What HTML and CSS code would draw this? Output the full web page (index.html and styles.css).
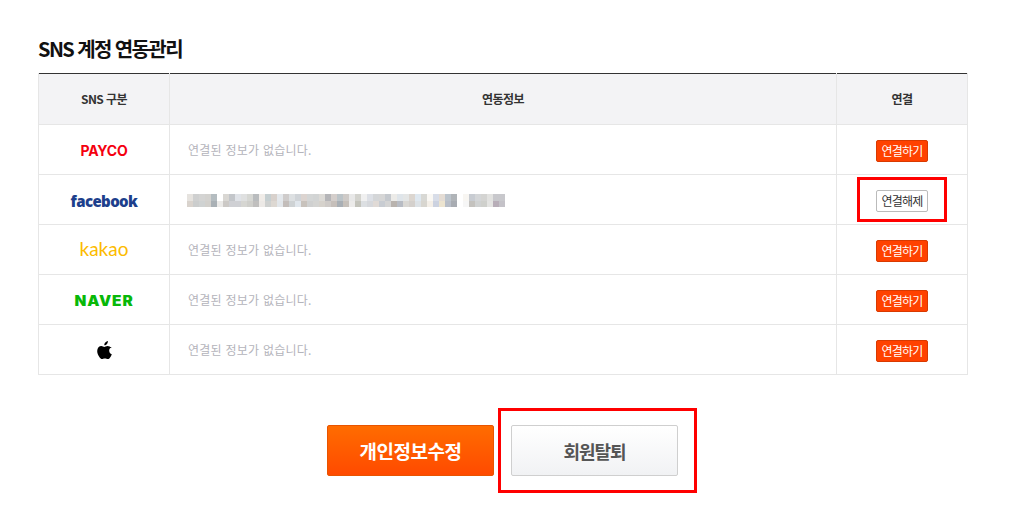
FILE: index.html
```html
<!DOCTYPE html>
<html lang="ko">

<head>
    <meta charset="UTF-8" />
    <title>SNS 계정 연동관리</title>
    <link rel="stylesheet" href="styles.css">
</head>

<body>
    <div class="wrapper">
        <h2 class="title">SNS 계정 연동관리</h2>

        <table class="sns-table">
            <thead>
                <tr>
                    <th class="col-sns">SNS 구분</th>
                    <th>연동정보</th>
                    <th class="col-link">연결</th>
                </tr>
            </thead>
            <tbody>
                <tr>
                    <td><span class="logo payco">PAYCO</span></td>
                    <td class="info">연결된 정보가 없습니다.</td>
                    <td><button type="button" class="btn-small on">연결하기</button></td>
                </tr>
                <tr>
                    <td><span class="logo facebook">facebook</span></td>
                    <td class="info">
                        <svg class="mosaic" width="320" height="16" viewBox="0 0 320 16" shape-rendering="crispEdges" aria-hidden="true">
                            <g>
                                <rect x="0" y="1" width="6" height="7" fill="#e6e3df" />
                                <rect x="6" y="1" width="6" height="7" fill="#cfd0d0" />
                                <rect x="12" y="1" width="6" height="7" fill="#d4d4d3" />
                                <rect x="18" y="1" width="6" height="7" fill="#d3d2cf" />
                                <rect x="24" y="1" width="6" height="7" fill="#b4bcc0" />
                                <rect x="36" y="1" width="6" height="7" fill="#d9d7d3" />
                                <rect x="42" y="1" width="6" height="7" fill="#c3c6ca" />
                                <rect x="48" y="1" width="6" height="7" fill="#e0e3e8" />
                                <rect x="54" y="1" width="6" height="7" fill="#dfe0e0" />
                                <rect x="60" y="1" width="6" height="7" fill="#d6d7d3" />
                                <rect x="66" y="1" width="6" height="7" fill="#b9bcbe" />
                                <rect x="72" y="1" width="6" height="7" fill="#f0ece8" />
                                <rect x="78" y="1" width="6" height="7" fill="#c6cfd1" />
                                <rect x="84" y="1" width="6" height="7" fill="#d8d1cc" />
                                <rect x="90" y="1" width="6" height="7" fill="#e4e8ec" />
                                <rect x="96" y="1" width="6" height="7" fill="#cfcccb" />
                                <rect x="102" y="1" width="6" height="7" fill="#dde0e2" />
                                <rect x="108" y="1" width="6" height="7" fill="#d0d4d8" />
                                <rect x="114" y="1" width="6" height="7" fill="#dcd4d0" />
                                <rect x="120" y="1" width="6" height="7" fill="#d4d6d6" />
                                <rect x="126" y="1" width="6" height="7" fill="#d2d4d4" />
                                <rect x="132" y="1" width="6" height="7" fill="#dcdad6" />
                                <rect x="138" y="1" width="6" height="7" fill="#b5b5b8" />
                                <rect x="144" y="1" width="6" height="7" fill="#d4cecb" />
                                <rect x="150" y="1" width="6" height="7" fill="#bcc4c8" />
                                <rect x="156" y="1" width="6" height="7" fill="#cfcbc8" />
                                <rect x="162" y="1" width="6" height="7" fill="#e8e8e8" />
                                <rect x="168" y="1" width="6" height="7" fill="#d3d3ce" />
                                <rect x="174" y="1" width="6" height="7" fill="#f0f0f0" />
                                <rect x="180" y="1" width="6" height="7" fill="#dde0e6" />
                                <rect x="186" y="1" width="6" height="7" fill="#d4d6d8" />
                                <rect x="192" y="1" width="6" height="7" fill="#d6d6d6" />
                                <rect x="198" y="1" width="6" height="7" fill="#c5c9ce" />
                                <rect x="204" y="1" width="6" height="7" fill="#ecebe8" />
                                <rect x="210" y="1" width="6" height="7" fill="#dfe5ea" />
                                <rect x="216" y="1" width="6" height="7" fill="#e4e6e6" />
                                <rect x="222" y="1" width="6" height="7" fill="#dcd6d0" />
                                <rect x="228" y="1" width="6" height="7" fill="#dfe8f0" />
                                <rect x="234" y="1" width="6" height="7" fill="#d8d8d4" />
                                <rect x="240" y="1" width="6" height="7" fill="#faf8f4" />
                                <rect x="246" y="1" width="6" height="7" fill="#d8dde8" />
                                <rect x="252" y="1" width="6" height="7" fill="#e4dcd4" />
                                <rect x="258" y="1" width="6" height="7" fill="#bcc4cc" />
                                <rect x="264" y="1" width="6" height="7" fill="#b0b4b8" />
                                <rect x="276" y="1" width="6" height="7" fill="#f8f6f2" />
                                <rect x="282" y="1" width="6" height="7" fill="#c8ccd2" />
                                <rect x="288" y="1" width="6" height="7" fill="#d4d6d8" />
                                <rect x="294" y="1" width="6" height="7" fill="#d4d4d2" />
                                <rect x="300" y="1" width="6" height="7" fill="#e2e2e0" />
                                <rect x="306" y="1" width="12" height="7" fill="#c8c8cc" />
                            </g>
                            <g>
                                <rect x="0" y="8" width="6" height="6" fill="#d9d3cd" />
                                <rect x="6" y="8" width="6" height="6" fill="#cbcdcd" />
                                <rect x="12" y="8" width="6" height="6" fill="#cfd2d2" />
                                <rect x="18" y="8" width="6" height="6" fill="#d2d0cc" />
                                <rect x="24" y="8" width="6" height="6" fill="#a9b0b5" />
                                <rect x="30" y="8" width="6" height="6" fill="#ebeae8" />
                                <rect x="36" y="8" width="6" height="6" fill="#ccc9c6" />
                                <rect x="42" y="8" width="12" height="6" fill="#cfd0d4" />
                                <rect x="54" y="8" width="6" height="6" fill="#d6d6d2" />
                                <rect x="60" y="8" width="6" height="6" fill="#cfcfcb" />
                                <rect x="66" y="8" width="6" height="6" fill="#c0bfbe" />
                                <rect x="72" y="8" width="6" height="6" fill="#ece9e6" />
                                <rect x="78" y="8" width="6" height="6" fill="#cfd1d0" />
                                <rect x="84" y="8" width="6" height="6" fill="#ddd8d2" />
                                <rect x="90" y="8" width="6" height="6" fill="#e2e6ea" />
                                <rect x="96" y="8" width="6" height="6" fill="#c3bdba" />
                                <rect x="102" y="8" width="6" height="6" fill="#ced2d4" />
                                <rect x="108" y="8" width="6" height="6" fill="#e0e6ec" />
                                <rect x="114" y="8" width="6" height="6" fill="#c8c2bc" />
                                <rect x="120" y="8" width="6" height="6" fill="#cfd0d0" />
                                <rect x="126" y="8" width="6" height="6" fill="#d4d4d2" />
                                <rect x="132" y="8" width="6" height="6" fill="#d6d2cc" />
                                <rect x="138" y="8" width="6" height="6" fill="#cfcbc8" />
                                <rect x="144" y="8" width="6" height="6" fill="#c6bfba" />
                                <rect x="150" y="8" width="6" height="6" fill="#a9afb5" />
                                <rect x="156" y="8" width="6" height="6" fill="#c6c0ba" />
                                <rect x="162" y="8" width="6" height="6" fill="#ecebea" />
                                <rect x="168" y="8" width="6" height="6" fill="#c4c4bc" />
                                <rect x="174" y="8" width="6" height="6" fill="#dcdfe2" />
                                <rect x="180" y="8" width="6" height="6" fill="#d6d8dc" />
                                <rect x="186" y="8" width="6" height="6" fill="#e0dad6" />
                                <rect x="192" y="8" width="6" height="6" fill="#c8ccd2" />
                                <rect x="198" y="8" width="6" height="6" fill="#d4d4d4" />
                                <rect x="204" y="8" width="6" height="6" fill="#b9b3ae" />
                                <rect x="210" y="8" width="6" height="6" fill="#b8bcc4" />
                                <rect x="216" y="8" width="6" height="6" fill="#dad8d4" />
                                <rect x="222" y="8" width="6" height="6" fill="#d4d0cc" />
                                <rect x="228" y="8" width="6" height="6" fill="#dde2e6" />
                                <rect x="234" y="8" width="6" height="6" fill="#d8d6d0" />
                                <rect x="240" y="8" width="6" height="6" fill="#f4efe8" />
                                <rect x="246" y="8" width="6" height="6" fill="#ccd2e0" />
                                <rect x="252" y="8" width="6" height="6" fill="#ece4d0" />
                                <rect x="258" y="8" width="6" height="6" fill="#b8bec8" />
                                <rect x="264" y="8" width="6" height="6" fill="#a8acb2" />
                                <rect x="276" y="8" width="6" height="6" fill="#f6f6f6" />
                                <rect x="282" y="8" width="6" height="6" fill="#c4c2be" />
                                <rect x="288" y="8" width="6" height="6" fill="#d0d2d2" />
                                <rect x="294" y="8" width="6" height="6" fill="#cfd0cc" />
                                <rect x="300" y="8" width="6" height="6" fill="#e4e4e2" />
                                <rect x="306" y="8" width="6" height="6" fill="#b8aeb8" />
                                <rect x="312" y="8" width="6" height="6" fill="#c4c2c8" />
                            </g>
                        </svg>
                    </td>
                    <td>
                        <span class="mark-holder">
                            <button type="button" class="btn-small">연결해제</button>
                            <span class="mark mark-small"></span>
                        </span>
                    </td>
                </tr>
                <tr>
                    <td><span class="logo kakao">kakao</span></td>
                    <td class="info">연결된 정보가 없습니다.</td>
                    <td><button type="button" class="btn-small on">연결하기</button></td>
                </tr>
                <tr>
                    <td><span class="logo naver">NAVER</span></td>
                    <td class="info">연결된 정보가 없습니다.</td>
                    <td><button type="button" class="btn-small on">연결하기</button></td>
                </tr>
                <tr>
                    <td>
                        <svg class="apple" width="15" height="18" viewBox="0 0 15 18" aria-label="Apple">
                            <path d="M10.9 0c.1 1.1-.3 2.1-.9 2.9-.7.8-1.700 1.400-2.700 1.300-.1-1 .4-2.100 1-2.800C9 .6 10.100.1 10.900 0zM14.300 6.200c-1.500.9-2.200 2-2.100 3.500.1 1.700 1 2.800 2.600 3.500-.4 1.200-1 2.300-1.700 3.300-.7 1-1.400 1.500-2.300 1.500-1 0-1.500-.6-2.900-.6-1.400 0-2 .6-2.900.6-.9 0-1.700-.6-2.500-1.800C.9 14.100.2 12 .2 10.100c0-3.100 2-5 4.200-5 1.200 0 2.100.8 2.900.8.700 0 1.800-.9 3.200-.9 1.600 0 2.900.7 3.800 2.200z" />
                        </svg>
                    </td>
                    <td class="info">연결된 정보가 없습니다.</td>
                    <td><button type="button" class="btn-small on">연결하기</button></td>
                </tr>
            </tbody>
        </table>

        <div class="btn-row">
            <button type="button" class="btn btn-edit">개인정보수정</button>
            <span class="mark-holder">
                <button type="button" class="btn btn-leave">회원탈퇴</button>
                <span class="mark mark-big"></span>
            </span>
        </div>
    </div>
</body>

</html>
```

FILE: styles.css
```css
* {
    box-sizing: border-box;
}

body {
    margin: 0;
    background-color: #fff;
    font-family: 'Noto Sans CJK KR', 'Noto Sans', sans-serif;
    color: #333;
}

.wrapper {
    width: 930px;
    margin-left: 38px;
    padding-top: 34px;
    padding-bottom: 42px;
}

.title {
    margin: 0 0 10px;
    font-size: 20px;
    line-height: 29px;
    font-weight: 700;
    letter-spacing: -1.6px;
    color: #111;
}

.sns-table {
    width: 100%;
    border-collapse: collapse;
    table-layout: fixed;
    border-top: 1px solid #333;
}

.sns-table th,
.sns-table td {
    border: 1px solid #e6e6e6;
    text-align: center;
    padding: 0;
}

.sns-table thead tr:first-child th {
    border-top: 0;
}

.sns-table th {
    height: 51px;
    padding-bottom: 2px;
    background-color: #f3f3f5;
    font-size: 12px;
    font-weight: 700;
    letter-spacing: -0.6px;
}

.sns-table td {
    height: 50px;
    padding-top: 2px;
}

.col-sns {
    width: 131px;
}

.col-link {
    width: 131px;
}

.sns-table td.info {
    text-align: left;
    padding-top: 0;
    padding-left: 18px;
    font-size: 12px;
    letter-spacing: 0.25px;
    color: #b4b4bb;
}

.mosaic {
    display: block;
    margin-top: 2px;
    margin-left: -1px;
}

/* logos */
.logo {
    display: block;
    line-height: 20px;
}

.payco {
    font-family: 'Inter', sans-serif;
    font-size: 14px;
    font-weight: 700;
    letter-spacing: -0.2px;
    color: #f5000f;
}

.facebook {
    font-family: 'Open Sans', sans-serif;
    font-size: 15px;
    font-weight: 800;
    letter-spacing: -0.6px;
    color: #1d3f8c;
}

.kakao {
    margin-bottom: 3px;
    font-family: 'Lato', sans-serif;
    font-size: 19px;
    font-weight: 400;
    letter-spacing: 0;
    color: #fcbb00;
}

.naver {
    font-family: 'Inter', sans-serif;
    font-size: 14px;
    font-weight: 900;
    letter-spacing: 0.8px;
    color: #08b808;
    transform: scaleX(1.1);
}

.apple {
    display: block;
    margin: 0 auto 2px;
    fill: #000;
}

/* buttons */
.btn-small {
    display: block;
    width: 52px;
    height: 22px;
    margin: 0 auto;
    padding: 0;
    border: 1px solid #bbb;
    border-radius: 2px;
    background-color: #fff;
    font-family: inherit;
    font-size: 12px;
    letter-spacing: -0.8px;
    line-height: 20px;
    color: #333;
}

.btn-small.on {
    border-color: #d93a00;
    background-color: #ff4200;
    color: #fff;
}

.btn-row {
    display: flex;
    justify-content: center;
    gap: 17px;
    margin-top: 50px;
    padding-right: 1px;
}

.btn {
    display: block;
    width: 167px;
    height: 51px;
    padding: 0;
    border-radius: 2px;
    font-family: inherit;
    font-weight: 700;
}

.btn-edit {
    border: 1px solid #e85400;
    background: linear-gradient(to bottom, #ff6c00, #ff4a00);
    font-size: 19px;
    letter-spacing: -0.5px;
    color: #fff;
}

.btn-leave {
    border: 1px solid #cfcfcf;
    background: linear-gradient(to bottom, #fff, #f1f2f4);
    font-size: 18px;
    letter-spacing: -1px;
    color: #555;
}

/* red boxes over the buttons */
.mark-holder {
    display: block;
    position: relative;
}

.mark {
    position: absolute;
    border: 3px solid #f00;
    pointer-events: none;
}

.mark-small {
    top: -13px;
    left: 20px;
    width: 90px;
    height: 45px;
}

.mark-big {
    top: -17px;
    left: -13px;
    width: 199px;
    height: 85px;
}
```
